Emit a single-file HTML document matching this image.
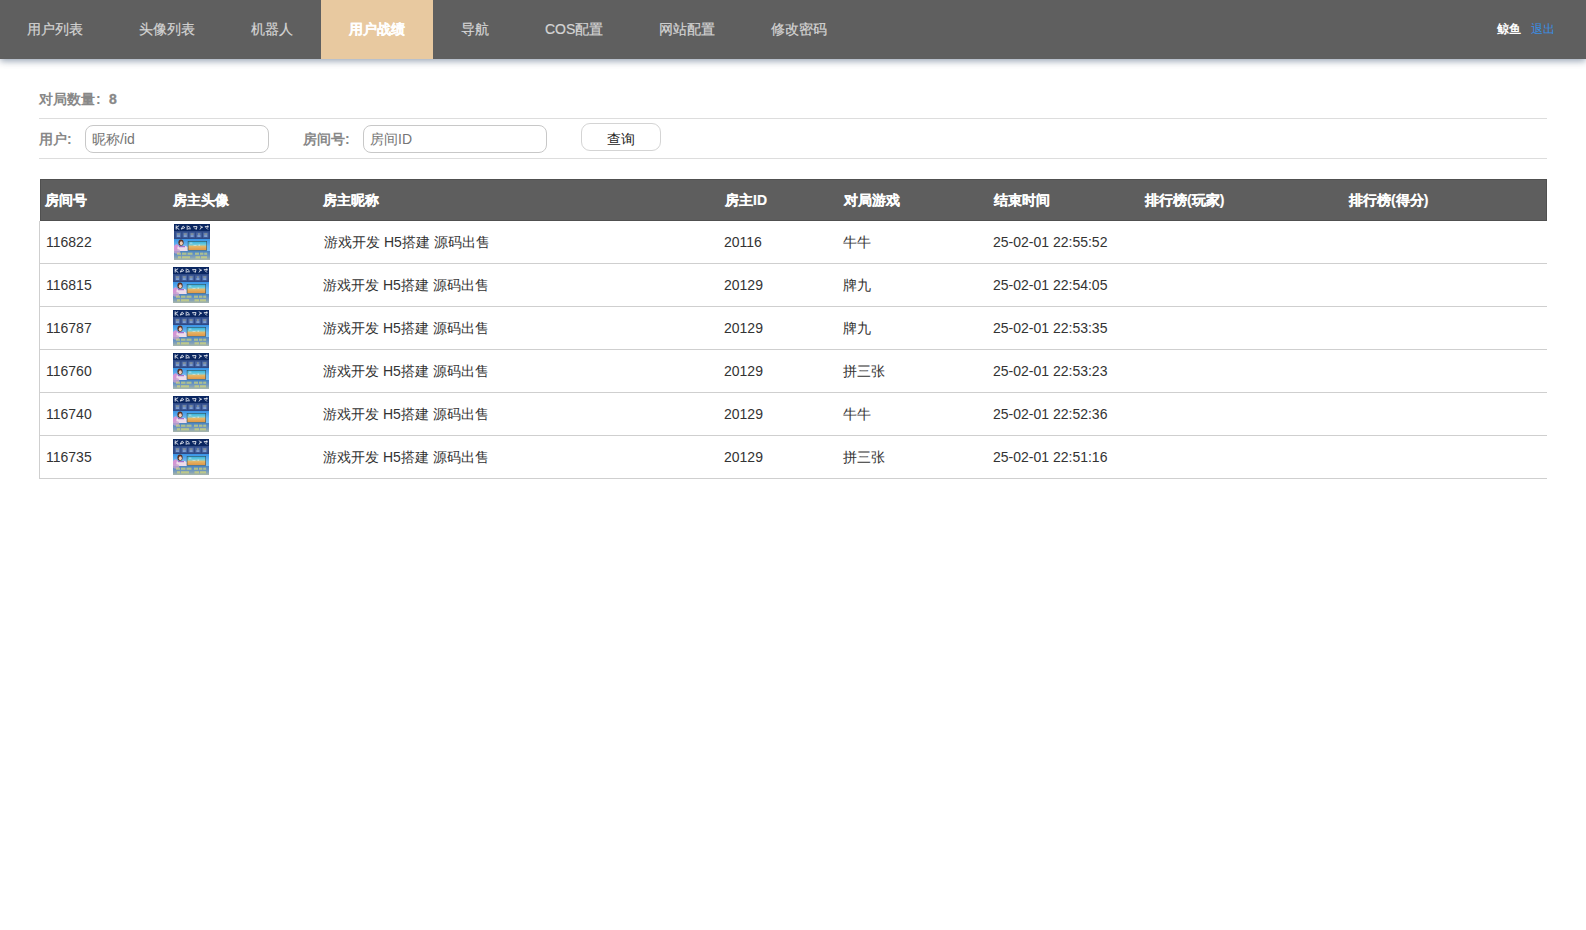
<!DOCTYPE html>
<html><head><meta charset="utf-8">
<style>
*{box-sizing:border-box;margin:0;padding:0}
html,body{width:1586px;height:930px;overflow:hidden;background:#fff;font-family:"Liberation Sans",sans-serif;font-size:14px;color:#333}
.nav{position:absolute;left:0;top:0;width:1586px;height:59px;background:#5f5f5f;box-shadow:0 2px 7px rgba(0,30,70,.42)}
.nav .it{position:absolute;top:0;height:59px;line-height:58px;color:#d4d4d4;font-size:14px;white-space:nowrap;-webkit-text-stroke:.2px #d4d4d4}
.nav .act{background:#e8c9a0;color:#fff;font-weight:bold;text-align:center;-webkit-text-stroke:.15px #fff}
.user{position:absolute;top:0;line-height:58px;color:#fff;font-weight:bold;font-size:12px}
.logout{position:absolute;top:0;line-height:58px;color:#3a8ee6;font-size:12px}
.cnt{position:absolute;left:39px;top:91px;font-weight:bold;color:#888;font-size:14px;line-height:16px;white-space:nowrap}
.hl{position:absolute;left:39px;width:1508px;height:1px;background:#ddd}
.lbl{position:absolute;top:131px;font-weight:bold;color:#888;font-size:14px;line-height:16px;white-space:nowrap}
.inp{position:absolute;top:125px;height:28px;border:1px solid #c8c8c8;border-radius:8px;color:#757575;font-size:14px;line-height:26px;padding-left:6px;white-space:nowrap}
.btn{position:absolute;left:581px;top:123px;width:80px;height:28px;border:1px solid #d4d4d4;border-radius:9px;text-align:center;line-height:29px;padding-top:1px;color:#222;font-size:14px;background:#fff}
.th{position:absolute;left:40px;top:179px;width:1507px;height:42px;background:#5e5e5e;border:1px solid #505050}
.th span{position:absolute;top:0;line-height:40px;color:#fff;font-weight:bold;font-size:14px;white-space:nowrap;-webkit-text-stroke:.15px #fff}
.tb{position:absolute;left:39px;top:0;width:1508px;height:479px;border-left:1px solid #cfcfcf}
.tb{top:221px;height:258px}
.r{position:absolute;left:-1px;width:1508px;height:43px;border-bottom:1px solid #cfcfcf}
.r .c{position:absolute;top:0;line-height:43px;white-space:nowrap;color:#333}
.av{position:absolute;top:3px;width:36px;height:36px;display:block}
.av svg{display:block;width:36px;height:36px}

</style></head><body>
<svg width="0" height="0" style="position:absolute;left:0;top:0"><defs><linearGradient id="sk" x1="0" y1="0" x2="0" y2="1"><stop offset=".42" stop-color="#3a94e6"/><stop offset=".62" stop-color="#70b8f0"/><stop offset="1" stop-color="#98c8ec"/></linearGradient><linearGradient id="gd" x1="0" y1="0" x2="0" y2="1"><stop offset="0" stop-color="#30b0e0"/><stop offset=".4" stop-color="#7cd0d8"/><stop offset=".55" stop-color="#e4b868"/><stop offset="1" stop-color="#e09848"/></linearGradient><linearGradient id="bt" x1="0" y1="0" x2="0" y2="1"><stop offset="0" stop-color="#4a84c4"/><stop offset=".45" stop-color="#6a94c0"/><stop offset="1" stop-color="#a8b6aa"/></linearGradient></defs></svg>
<div class="nav">
  <div class="it" style="left:27px">用户列表</div>
  <div class="it" style="left:139px">头像列表</div>
  <div class="it" style="left:251px">机器人</div>
  <div class="it act" style="left:321px;width:112px">用户战绩</div>
  <div class="it" style="left:461px">导航</div>
  <div class="it" style="left:545px">COS配置</div>
  <div class="it" style="left:659px">网站配置</div>
  <div class="it" style="left:771px">修改密码</div>
  <div class="user" style="left:1497px">鲸鱼</div>
  <div class="logout" style="left:1531px">退出</div>
</div>
<div class="cnt">对局数量<span style="display:inline-block;width:14px;padding-left:1px">:</span><span style="-webkit-text-stroke:.3px #888">8</span></div>
<div class="hl" style="top:118px"></div>
<div class="lbl" style="left:39px">用户:</div>
<div class="inp" style="left:85px;width:184px">昵称/id</div>
<div class="lbl" style="left:303px">房间号:</div>
<div class="inp" style="left:363px;width:184px">房间ID</div>
<div class="btn">查询</div>
<div class="hl" style="top:158px"></div>
<div class="th">
  <span style="left:4px">房间号</span>
  <span style="left:132px">房主头像</span>
  <span style="left:282px">房主昵称</span>
  <span style="left:684px">房主ID</span>
  <span style="left:803px">对局游戏</span>
  <span style="left:953px">结束时间</span>
  <span style="left:1104px">排行榜(玩家)</span>
  <span style="left:1308px">排行榜(得分)</span>
</div>

<div class="tb">
<div class="r" style="top:0px"><span class="c" style="left:7px">116822</span><span class="av" style="left:135px"><svg viewBox="0 0 36 36"><rect width="36" height="36" fill="url(#sk)"/><rect width="36" height="7" fill="#0a2660"/><g fill="none" stroke="#e6eaf2" stroke-width=".9" stroke-linecap="round"><path d="M2.2 1.8v3.4M2.2 3.5l2.6-1.6M3 3.8l2 1.6"/><path d="M7.4 4.6l1.8-2.6 1.6 1.6-3.2 1.4"/><path d="M13.2 2v3.4M14.4 2.4l1.6 1M14.4 4.8h2"/><path d="M19.6 2.6h3.4l-.6 2.4M20.4 3.8l1.4 1.4"/><path d="M26.4 1.8l1.2 1.4-1.4 2M27 3.2h1.6"/><path d="M31.2 2.6h3M32 3.6l1.6 1.6M33.8 1.8v1.6"/></g><rect y="7" width="36" height="8" fill="#2f4a86"/><g fill="#4c69a6"><rect x="1.8" y="8.5" width="5.4" height="5"/><rect x="8.6" y="8.5" width="5.4" height="5"/><rect x="15.4" y="8.5" width="5.4" height="5"/><rect x="22.2" y="8.5" width="5.4" height="5"/><rect x="29" y="8.5" width="5.4" height="5"/></g><g fill="#d8d090" opacity=".75"><rect x="3" y="9.6" width="3" height=".9"/><rect x="9.8" y="9.6" width="3" height=".9"/><rect x="16.6" y="9.6" width="3" height=".9"/><rect x="24" y="9.6" width="1.8" height=".9"/><rect x="30.2" y="9.6" width="3" height=".9"/></g><g fill="#a0c4f0" opacity=".75"><rect x="3" y="11.3" width="3" height="1.5"/><rect x="9.8" y="11.3" width="3" height="1.5"/><rect x="16.6" y="11.3" width="3" height="1.5"/><rect x="23.4" y="11.3" width="3" height="1.5"/><rect x="30.2" y="11.3" width="3" height="1.5"/></g><ellipse cx="2.6" cy="25.5" rx="3.2" ry="5.2" fill="#d494d4"/><ellipse cx="7" cy="18.6" rx="2.6" ry="3.2" fill="#5c3020"/><ellipse cx="7.3" cy="19.3" rx="1.5" ry="2" fill="#f2cdb6"/><path d="M3.6 22.4L11 21.8l2.6 1.2v3.6l-1.4 2L3 29.4Z" fill="#eedcea"/><rect x="5" y="22.1" width="6" height="1.1" fill="#9a64c8"/><rect x="13.8" y="17" width="19.2" height="9.6" fill="#38505c"/><rect x="14.4" y="17.6" width="18" height="8.4" fill="url(#gd)"/><g fill="#e8f0f8" opacity=".6"><rect x="16" y="18.6" width="2.4" height="1"/><rect x="19.5" y="21" width="3" height=".8"/><rect x="24.5" y="20.6" width="1.6" height="1.2"/></g><rect x="0" y="27" width="36" height="9" fill="url(#bt)"/><ellipse cx="3" cy="27.4" rx="3.2" ry="2.4" fill="#c8a0d0" opacity=".8"/><g fill="#e0e070" opacity=".6"><rect x="3" y="28.6" width="4" height="2.2"/><rect x="8" y="28.6" width="4.5" height="2.2"/><rect x="13.5" y="28.6" width="5" height="2.2"/><rect x="21" y="28.6" width="4" height="2.2"/><rect x="26" y="28.6" width="3.4" height="2.2"/><rect x="30.2" y="28.6" width="3" height="2.2"/><rect x="4" y="32.2" width="3" height="2.2"/><rect x="8" y="32.2" width="8" height="2.2"/><rect x="21.5" y="32.2" width="4.5" height="2.2"/><rect x="27" y="32.2" width="6" height="2.2"/></g></svg></span><span class="c" style="left:285px">游戏开发 H5搭建 源码出售</span><span class="c" style="left:685px">20116</span><span class="c" style="left:804px">牛牛</span><span class="c" style="left:954px">25-02-01 22:55:52</span></div><div class="r" style="top:43px"><span class="c" style="left:7px">116815</span><span class="av" style="left:134px"><svg viewBox="0 0 36 36"><rect width="36" height="36" fill="url(#sk)"/><rect width="36" height="7" fill="#0a2660"/><g fill="none" stroke="#e6eaf2" stroke-width=".9" stroke-linecap="round"><path d="M2.2 1.8v3.4M2.2 3.5l2.6-1.6M3 3.8l2 1.6"/><path d="M7.4 4.6l1.8-2.6 1.6 1.6-3.2 1.4"/><path d="M13.2 2v3.4M14.4 2.4l1.6 1M14.4 4.8h2"/><path d="M19.6 2.6h3.4l-.6 2.4M20.4 3.8l1.4 1.4"/><path d="M26.4 1.8l1.2 1.4-1.4 2M27 3.2h1.6"/><path d="M31.2 2.6h3M32 3.6l1.6 1.6M33.8 1.8v1.6"/></g><rect y="7" width="36" height="8" fill="#2f4a86"/><g fill="#4c69a6"><rect x="1.8" y="8.5" width="5.4" height="5"/><rect x="8.6" y="8.5" width="5.4" height="5"/><rect x="15.4" y="8.5" width="5.4" height="5"/><rect x="22.2" y="8.5" width="5.4" height="5"/><rect x="29" y="8.5" width="5.4" height="5"/></g><g fill="#d8d090" opacity=".75"><rect x="3" y="9.6" width="3" height=".9"/><rect x="9.8" y="9.6" width="3" height=".9"/><rect x="16.6" y="9.6" width="3" height=".9"/><rect x="24" y="9.6" width="1.8" height=".9"/><rect x="30.2" y="9.6" width="3" height=".9"/></g><g fill="#a0c4f0" opacity=".75"><rect x="3" y="11.3" width="3" height="1.5"/><rect x="9.8" y="11.3" width="3" height="1.5"/><rect x="16.6" y="11.3" width="3" height="1.5"/><rect x="23.4" y="11.3" width="3" height="1.5"/><rect x="30.2" y="11.3" width="3" height="1.5"/></g><ellipse cx="2.6" cy="25.5" rx="3.2" ry="5.2" fill="#d494d4"/><ellipse cx="7" cy="18.6" rx="2.6" ry="3.2" fill="#5c3020"/><ellipse cx="7.3" cy="19.3" rx="1.5" ry="2" fill="#f2cdb6"/><path d="M3.6 22.4L11 21.8l2.6 1.2v3.6l-1.4 2L3 29.4Z" fill="#eedcea"/><rect x="5" y="22.1" width="6" height="1.1" fill="#9a64c8"/><rect x="13.8" y="17" width="19.2" height="9.6" fill="#38505c"/><rect x="14.4" y="17.6" width="18" height="8.4" fill="url(#gd)"/><g fill="#e8f0f8" opacity=".6"><rect x="16" y="18.6" width="2.4" height="1"/><rect x="19.5" y="21" width="3" height=".8"/><rect x="24.5" y="20.6" width="1.6" height="1.2"/></g><rect x="0" y="27" width="36" height="9" fill="url(#bt)"/><ellipse cx="3" cy="27.4" rx="3.2" ry="2.4" fill="#c8a0d0" opacity=".8"/><g fill="#e0e070" opacity=".6"><rect x="3" y="28.6" width="4" height="2.2"/><rect x="8" y="28.6" width="4.5" height="2.2"/><rect x="13.5" y="28.6" width="5" height="2.2"/><rect x="21" y="28.6" width="4" height="2.2"/><rect x="26" y="28.6" width="3.4" height="2.2"/><rect x="30.2" y="28.6" width="3" height="2.2"/><rect x="4" y="32.2" width="3" height="2.2"/><rect x="8" y="32.2" width="8" height="2.2"/><rect x="21.5" y="32.2" width="4.5" height="2.2"/><rect x="27" y="32.2" width="6" height="2.2"/></g></svg></span><span class="c" style="left:284px">游戏开发 H5搭建 源码出售</span><span class="c" style="left:685px">20129</span><span class="c" style="left:804px">牌九</span><span class="c" style="left:954px">25-02-01 22:54:05</span></div><div class="r" style="top:86px"><span class="c" style="left:7px">116787</span><span class="av" style="left:134px"><svg viewBox="0 0 36 36"><rect width="36" height="36" fill="url(#sk)"/><rect width="36" height="7" fill="#0a2660"/><g fill="none" stroke="#e6eaf2" stroke-width=".9" stroke-linecap="round"><path d="M2.2 1.8v3.4M2.2 3.5l2.6-1.6M3 3.8l2 1.6"/><path d="M7.4 4.6l1.8-2.6 1.6 1.6-3.2 1.4"/><path d="M13.2 2v3.4M14.4 2.4l1.6 1M14.4 4.8h2"/><path d="M19.6 2.6h3.4l-.6 2.4M20.4 3.8l1.4 1.4"/><path d="M26.4 1.8l1.2 1.4-1.4 2M27 3.2h1.6"/><path d="M31.2 2.6h3M32 3.6l1.6 1.6M33.8 1.8v1.6"/></g><rect y="7" width="36" height="8" fill="#2f4a86"/><g fill="#4c69a6"><rect x="1.8" y="8.5" width="5.4" height="5"/><rect x="8.6" y="8.5" width="5.4" height="5"/><rect x="15.4" y="8.5" width="5.4" height="5"/><rect x="22.2" y="8.5" width="5.4" height="5"/><rect x="29" y="8.5" width="5.4" height="5"/></g><g fill="#d8d090" opacity=".75"><rect x="3" y="9.6" width="3" height=".9"/><rect x="9.8" y="9.6" width="3" height=".9"/><rect x="16.6" y="9.6" width="3" height=".9"/><rect x="24" y="9.6" width="1.8" height=".9"/><rect x="30.2" y="9.6" width="3" height=".9"/></g><g fill="#a0c4f0" opacity=".75"><rect x="3" y="11.3" width="3" height="1.5"/><rect x="9.8" y="11.3" width="3" height="1.5"/><rect x="16.6" y="11.3" width="3" height="1.5"/><rect x="23.4" y="11.3" width="3" height="1.5"/><rect x="30.2" y="11.3" width="3" height="1.5"/></g><ellipse cx="2.6" cy="25.5" rx="3.2" ry="5.2" fill="#d494d4"/><ellipse cx="7" cy="18.6" rx="2.6" ry="3.2" fill="#5c3020"/><ellipse cx="7.3" cy="19.3" rx="1.5" ry="2" fill="#f2cdb6"/><path d="M3.6 22.4L11 21.8l2.6 1.2v3.6l-1.4 2L3 29.4Z" fill="#eedcea"/><rect x="5" y="22.1" width="6" height="1.1" fill="#9a64c8"/><rect x="13.8" y="17" width="19.2" height="9.6" fill="#38505c"/><rect x="14.4" y="17.6" width="18" height="8.4" fill="url(#gd)"/><g fill="#e8f0f8" opacity=".6"><rect x="16" y="18.6" width="2.4" height="1"/><rect x="19.5" y="21" width="3" height=".8"/><rect x="24.5" y="20.6" width="1.6" height="1.2"/></g><rect x="0" y="27" width="36" height="9" fill="url(#bt)"/><ellipse cx="3" cy="27.4" rx="3.2" ry="2.4" fill="#c8a0d0" opacity=".8"/><g fill="#e0e070" opacity=".6"><rect x="3" y="28.6" width="4" height="2.2"/><rect x="8" y="28.6" width="4.5" height="2.2"/><rect x="13.5" y="28.6" width="5" height="2.2"/><rect x="21" y="28.6" width="4" height="2.2"/><rect x="26" y="28.6" width="3.4" height="2.2"/><rect x="30.2" y="28.6" width="3" height="2.2"/><rect x="4" y="32.2" width="3" height="2.2"/><rect x="8" y="32.2" width="8" height="2.2"/><rect x="21.5" y="32.2" width="4.5" height="2.2"/><rect x="27" y="32.2" width="6" height="2.2"/></g></svg></span><span class="c" style="left:284px">游戏开发 H5搭建 源码出售</span><span class="c" style="left:685px">20129</span><span class="c" style="left:804px">牌九</span><span class="c" style="left:954px">25-02-01 22:53:35</span></div><div class="r" style="top:129px"><span class="c" style="left:7px">116760</span><span class="av" style="left:134px"><svg viewBox="0 0 36 36"><rect width="36" height="36" fill="url(#sk)"/><rect width="36" height="7" fill="#0a2660"/><g fill="none" stroke="#e6eaf2" stroke-width=".9" stroke-linecap="round"><path d="M2.2 1.8v3.4M2.2 3.5l2.6-1.6M3 3.8l2 1.6"/><path d="M7.4 4.6l1.8-2.6 1.6 1.6-3.2 1.4"/><path d="M13.2 2v3.4M14.4 2.4l1.6 1M14.4 4.8h2"/><path d="M19.6 2.6h3.4l-.6 2.4M20.4 3.8l1.4 1.4"/><path d="M26.4 1.8l1.2 1.4-1.4 2M27 3.2h1.6"/><path d="M31.2 2.6h3M32 3.6l1.6 1.6M33.8 1.8v1.6"/></g><rect y="7" width="36" height="8" fill="#2f4a86"/><g fill="#4c69a6"><rect x="1.8" y="8.5" width="5.4" height="5"/><rect x="8.6" y="8.5" width="5.4" height="5"/><rect x="15.4" y="8.5" width="5.4" height="5"/><rect x="22.2" y="8.5" width="5.4" height="5"/><rect x="29" y="8.5" width="5.4" height="5"/></g><g fill="#d8d090" opacity=".75"><rect x="3" y="9.6" width="3" height=".9"/><rect x="9.8" y="9.6" width="3" height=".9"/><rect x="16.6" y="9.6" width="3" height=".9"/><rect x="24" y="9.6" width="1.8" height=".9"/><rect x="30.2" y="9.6" width="3" height=".9"/></g><g fill="#a0c4f0" opacity=".75"><rect x="3" y="11.3" width="3" height="1.5"/><rect x="9.8" y="11.3" width="3" height="1.5"/><rect x="16.6" y="11.3" width="3" height="1.5"/><rect x="23.4" y="11.3" width="3" height="1.5"/><rect x="30.2" y="11.3" width="3" height="1.5"/></g><ellipse cx="2.6" cy="25.5" rx="3.2" ry="5.2" fill="#d494d4"/><ellipse cx="7" cy="18.6" rx="2.6" ry="3.2" fill="#5c3020"/><ellipse cx="7.3" cy="19.3" rx="1.5" ry="2" fill="#f2cdb6"/><path d="M3.6 22.4L11 21.8l2.6 1.2v3.6l-1.4 2L3 29.4Z" fill="#eedcea"/><rect x="5" y="22.1" width="6" height="1.1" fill="#9a64c8"/><rect x="13.8" y="17" width="19.2" height="9.6" fill="#38505c"/><rect x="14.4" y="17.6" width="18" height="8.4" fill="url(#gd)"/><g fill="#e8f0f8" opacity=".6"><rect x="16" y="18.6" width="2.4" height="1"/><rect x="19.5" y="21" width="3" height=".8"/><rect x="24.5" y="20.6" width="1.6" height="1.2"/></g><rect x="0" y="27" width="36" height="9" fill="url(#bt)"/><ellipse cx="3" cy="27.4" rx="3.2" ry="2.4" fill="#c8a0d0" opacity=".8"/><g fill="#e0e070" opacity=".6"><rect x="3" y="28.6" width="4" height="2.2"/><rect x="8" y="28.6" width="4.5" height="2.2"/><rect x="13.5" y="28.6" width="5" height="2.2"/><rect x="21" y="28.6" width="4" height="2.2"/><rect x="26" y="28.6" width="3.4" height="2.2"/><rect x="30.2" y="28.6" width="3" height="2.2"/><rect x="4" y="32.2" width="3" height="2.2"/><rect x="8" y="32.2" width="8" height="2.2"/><rect x="21.5" y="32.2" width="4.5" height="2.2"/><rect x="27" y="32.2" width="6" height="2.2"/></g></svg></span><span class="c" style="left:284px">游戏开发 H5搭建 源码出售</span><span class="c" style="left:685px">20129</span><span class="c" style="left:804px">拼三张</span><span class="c" style="left:954px">25-02-01 22:53:23</span></div><div class="r" style="top:172px"><span class="c" style="left:7px">116740</span><span class="av" style="left:134px"><svg viewBox="0 0 36 36"><rect width="36" height="36" fill="url(#sk)"/><rect width="36" height="7" fill="#0a2660"/><g fill="none" stroke="#e6eaf2" stroke-width=".9" stroke-linecap="round"><path d="M2.2 1.8v3.4M2.2 3.5l2.6-1.6M3 3.8l2 1.6"/><path d="M7.4 4.6l1.8-2.6 1.6 1.6-3.2 1.4"/><path d="M13.2 2v3.4M14.4 2.4l1.6 1M14.4 4.8h2"/><path d="M19.6 2.6h3.4l-.6 2.4M20.4 3.8l1.4 1.4"/><path d="M26.4 1.8l1.2 1.4-1.4 2M27 3.2h1.6"/><path d="M31.2 2.6h3M32 3.6l1.6 1.6M33.8 1.8v1.6"/></g><rect y="7" width="36" height="8" fill="#2f4a86"/><g fill="#4c69a6"><rect x="1.8" y="8.5" width="5.4" height="5"/><rect x="8.6" y="8.5" width="5.4" height="5"/><rect x="15.4" y="8.5" width="5.4" height="5"/><rect x="22.2" y="8.5" width="5.4" height="5"/><rect x="29" y="8.5" width="5.4" height="5"/></g><g fill="#d8d090" opacity=".75"><rect x="3" y="9.6" width="3" height=".9"/><rect x="9.8" y="9.6" width="3" height=".9"/><rect x="16.6" y="9.6" width="3" height=".9"/><rect x="24" y="9.6" width="1.8" height=".9"/><rect x="30.2" y="9.6" width="3" height=".9"/></g><g fill="#a0c4f0" opacity=".75"><rect x="3" y="11.3" width="3" height="1.5"/><rect x="9.8" y="11.3" width="3" height="1.5"/><rect x="16.6" y="11.3" width="3" height="1.5"/><rect x="23.4" y="11.3" width="3" height="1.5"/><rect x="30.2" y="11.3" width="3" height="1.5"/></g><ellipse cx="2.6" cy="25.5" rx="3.2" ry="5.2" fill="#d494d4"/><ellipse cx="7" cy="18.6" rx="2.6" ry="3.2" fill="#5c3020"/><ellipse cx="7.3" cy="19.3" rx="1.5" ry="2" fill="#f2cdb6"/><path d="M3.6 22.4L11 21.8l2.6 1.2v3.6l-1.4 2L3 29.4Z" fill="#eedcea"/><rect x="5" y="22.1" width="6" height="1.1" fill="#9a64c8"/><rect x="13.8" y="17" width="19.2" height="9.6" fill="#38505c"/><rect x="14.4" y="17.6" width="18" height="8.4" fill="url(#gd)"/><g fill="#e8f0f8" opacity=".6"><rect x="16" y="18.6" width="2.4" height="1"/><rect x="19.5" y="21" width="3" height=".8"/><rect x="24.5" y="20.6" width="1.6" height="1.2"/></g><rect x="0" y="27" width="36" height="9" fill="url(#bt)"/><ellipse cx="3" cy="27.4" rx="3.2" ry="2.4" fill="#c8a0d0" opacity=".8"/><g fill="#e0e070" opacity=".6"><rect x="3" y="28.6" width="4" height="2.2"/><rect x="8" y="28.6" width="4.5" height="2.2"/><rect x="13.5" y="28.6" width="5" height="2.2"/><rect x="21" y="28.6" width="4" height="2.2"/><rect x="26" y="28.6" width="3.4" height="2.2"/><rect x="30.2" y="28.6" width="3" height="2.2"/><rect x="4" y="32.2" width="3" height="2.2"/><rect x="8" y="32.2" width="8" height="2.2"/><rect x="21.5" y="32.2" width="4.5" height="2.2"/><rect x="27" y="32.2" width="6" height="2.2"/></g></svg></span><span class="c" style="left:284px">游戏开发 H5搭建 源码出售</span><span class="c" style="left:685px">20129</span><span class="c" style="left:804px">牛牛</span><span class="c" style="left:954px">25-02-01 22:52:36</span></div><div class="r" style="top:215px"><span class="c" style="left:7px">116735</span><span class="av" style="left:134px"><svg viewBox="0 0 36 36"><rect width="36" height="36" fill="url(#sk)"/><rect width="36" height="7" fill="#0a2660"/><g fill="none" stroke="#e6eaf2" stroke-width=".9" stroke-linecap="round"><path d="M2.2 1.8v3.4M2.2 3.5l2.6-1.6M3 3.8l2 1.6"/><path d="M7.4 4.6l1.8-2.6 1.6 1.6-3.2 1.4"/><path d="M13.2 2v3.4M14.4 2.4l1.6 1M14.4 4.8h2"/><path d="M19.6 2.6h3.4l-.6 2.4M20.4 3.8l1.4 1.4"/><path d="M26.4 1.8l1.2 1.4-1.4 2M27 3.2h1.6"/><path d="M31.2 2.6h3M32 3.6l1.6 1.6M33.8 1.8v1.6"/></g><rect y="7" width="36" height="8" fill="#2f4a86"/><g fill="#4c69a6"><rect x="1.8" y="8.5" width="5.4" height="5"/><rect x="8.6" y="8.5" width="5.4" height="5"/><rect x="15.4" y="8.5" width="5.4" height="5"/><rect x="22.2" y="8.5" width="5.4" height="5"/><rect x="29" y="8.5" width="5.4" height="5"/></g><g fill="#d8d090" opacity=".75"><rect x="3" y="9.6" width="3" height=".9"/><rect x="9.8" y="9.6" width="3" height=".9"/><rect x="16.6" y="9.6" width="3" height=".9"/><rect x="24" y="9.6" width="1.8" height=".9"/><rect x="30.2" y="9.6" width="3" height=".9"/></g><g fill="#a0c4f0" opacity=".75"><rect x="3" y="11.3" width="3" height="1.5"/><rect x="9.8" y="11.3" width="3" height="1.5"/><rect x="16.6" y="11.3" width="3" height="1.5"/><rect x="23.4" y="11.3" width="3" height="1.5"/><rect x="30.2" y="11.3" width="3" height="1.5"/></g><ellipse cx="2.6" cy="25.5" rx="3.2" ry="5.2" fill="#d494d4"/><ellipse cx="7" cy="18.6" rx="2.6" ry="3.2" fill="#5c3020"/><ellipse cx="7.3" cy="19.3" rx="1.5" ry="2" fill="#f2cdb6"/><path d="M3.6 22.4L11 21.8l2.6 1.2v3.6l-1.4 2L3 29.4Z" fill="#eedcea"/><rect x="5" y="22.1" width="6" height="1.1" fill="#9a64c8"/><rect x="13.8" y="17" width="19.2" height="9.6" fill="#38505c"/><rect x="14.4" y="17.6" width="18" height="8.4" fill="url(#gd)"/><g fill="#e8f0f8" opacity=".6"><rect x="16" y="18.6" width="2.4" height="1"/><rect x="19.5" y="21" width="3" height=".8"/><rect x="24.5" y="20.6" width="1.6" height="1.2"/></g><rect x="0" y="27" width="36" height="9" fill="url(#bt)"/><ellipse cx="3" cy="27.4" rx="3.2" ry="2.4" fill="#c8a0d0" opacity=".8"/><g fill="#e0e070" opacity=".6"><rect x="3" y="28.6" width="4" height="2.2"/><rect x="8" y="28.6" width="4.5" height="2.2"/><rect x="13.5" y="28.6" width="5" height="2.2"/><rect x="21" y="28.6" width="4" height="2.2"/><rect x="26" y="28.6" width="3.4" height="2.2"/><rect x="30.2" y="28.6" width="3" height="2.2"/><rect x="4" y="32.2" width="3" height="2.2"/><rect x="8" y="32.2" width="8" height="2.2"/><rect x="21.5" y="32.2" width="4.5" height="2.2"/><rect x="27" y="32.2" width="6" height="2.2"/></g></svg></span><span class="c" style="left:284px">游戏开发 H5搭建 源码出售</span><span class="c" style="left:685px">20129</span><span class="c" style="left:804px">拼三张</span><span class="c" style="left:954px">25-02-01 22:51:16</span></div>
</div>
</body></html>
